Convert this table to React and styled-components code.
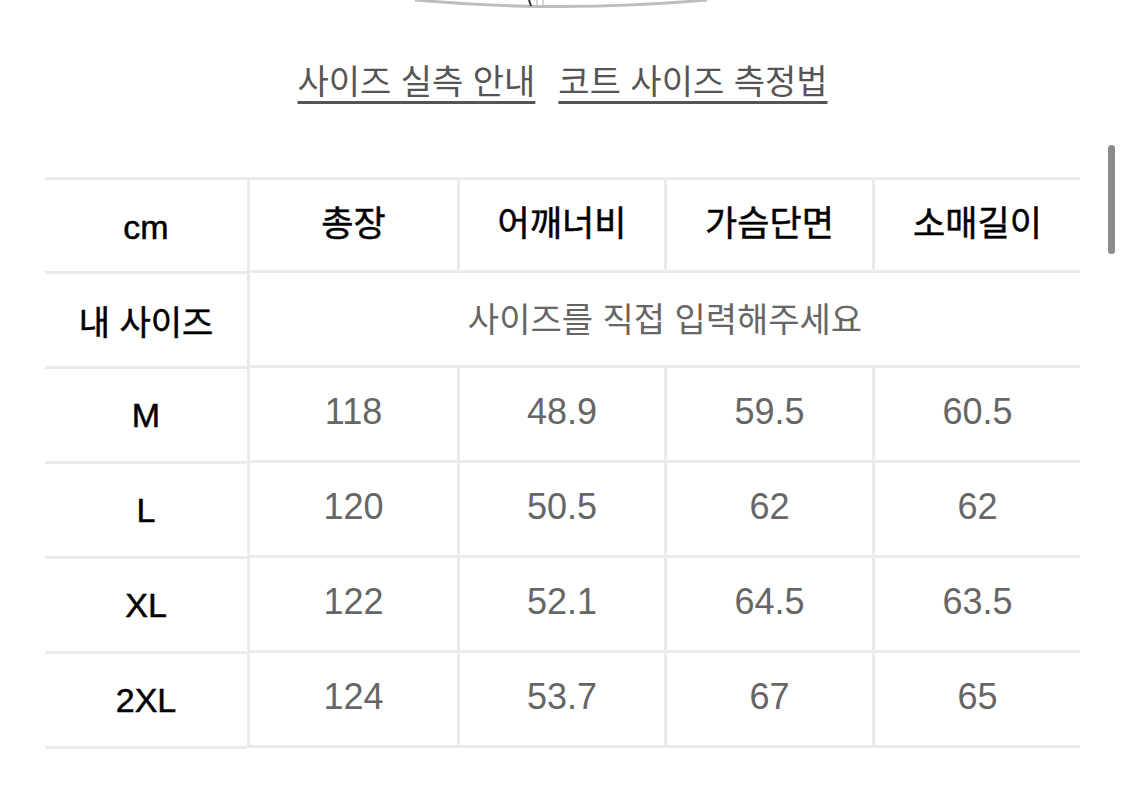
import React from 'react';
import styled, { createGlobalStyle } from 'styled-components';

const GlobalStyle = createGlobalStyle`
  html, body {
    margin: 0;
    padding: 0;
    background: #fff;
  }
  body {
    font-family: "Liberation Sans", "Noto Sans CJK KR", sans-serif;
    overflow: hidden;
  }
`;

const Page = styled.div`
  width: 1125px;
  height: 799px;
  position: relative;
  overflow: hidden;
`;

const Illustration = styled.div`
  height: 10px;
  display: flex;
  justify-content: center;
  padding-right: 4px;
  svg {
    display: block;
  }
`;

const GuideLinks = styled.div`
  display: flex;
  justify-content: center;
  gap: 23px;
  margin-top: 50px;
  height: 48px;
`;

const GuideLink = styled.a`
  font-size: 34px;
  line-height: 44px;
  color: #555;
  text-decoration: underline;
  text-decoration-thickness: 3px;
  text-underline-offset: 7px;
  cursor: pointer;
`;

const TableWrap = styled.div`
  margin: 69px 45px 0;
  display: flex;
  align-items: flex-start;
`;

const LabelColumn = styled.div`
  width: 202px;
  display: flex;
  flex-direction: column;
  border-top: 3px solid #ebebeb;
`;

const DataGrid = styled.div`
  flex: 1;
  display: grid;
  grid-template-columns: 210px 207px 208px 208px;
  border-top: 3px solid #ebebeb;
`;

const Cell = styled.div`
  height: ${(p) => (p.$head ? '80px' : '88px')};
  padding-bottom: ${(p) => (p.$head ? '10px' : '4px')};
  display: flex;
  align-items: center;
  justify-content: center;
  border-bottom: 3px solid #ebebeb;
  border-left: 3px solid #ebebeb;
  color: ${(p) => (p.$head ? '#000' : '#666')};
  font-size: ${(p) => (p.$head ? '35px' : p.$note ? '34px' : '36px')};
  -webkit-text-stroke: ${(p) => (p.$head ? '0.5px #000' : '0')};
  white-space: nowrap;
  grid-column: ${(p) => (p.$note ? '1 / -1' : 'auto')};
`;

const LabelCell = styled.div`
  height: ${(p) => (p.$head ? '88px' : '92px')};
  padding-top: ${(p) => (p.$head ? '3px' : '0')};
  display: flex;
  align-items: center;
  justify-content: center;
  border-bottom: 3px solid #ebebeb;
  color: #000;
  font-size: 34px;
  -webkit-text-stroke: 0.5px #000;
  white-space: nowrap;
`;

const Scrollbar = styled.div`
  position: absolute;
  right: 10px;
  top: 145px;
  width: 7px;
  height: 109px;
  border-radius: 4px;
  background: #8a8a8a;
`;

const headers = ['총장', '어깨너비', '가슴단면', '소매길이'];
const rows = [
  { size: 'M', values: ['118', '48.9', '59.5', '60.5'] },
  { size: 'L', values: ['120', '50.5', '62', '62'] },
  { size: 'XL', values: ['122', '52.1', '64.5', '63.5'] },
  { size: '2XL', values: ['124', '53.7', '67', '65'] },
];

export default function App() {
  return (
    <Page>
      <GlobalStyle />
      <Illustration>
        <svg width="296" height="10" viewBox="0 0 296 10">
          <path d="M2 0 Q148 13 294 0" fill="none" stroke="#bdbdbd" strokeWidth="3" />
          <path d="M116 0 L118 6" stroke="#333" strokeWidth="2" />
          <path d="M124 0 L124 5 M130 0 L130 5" stroke="#aaa" strokeWidth="1" />
        </svg>
      </Illustration>
      <GuideLinks>
        <GuideLink>사이즈 실측 안내</GuideLink>
        <GuideLink>코트 사이즈 측정법</GuideLink>
      </GuideLinks>
      <TableWrap>
        <LabelColumn>
          <LabelCell $head>cm</LabelCell>
          <LabelCell>내 사이즈</LabelCell>
          {rows.map((r) => (
            <LabelCell key={r.size}>{r.size}</LabelCell>
          ))}
        </LabelColumn>
        <DataGrid>
          {headers.map((h) => (
            <Cell key={h} $head>
              {h}
            </Cell>
          ))}
          <Cell $note>사이즈를 직접 입력해주세요</Cell>
          {rows.map((r) =>
            r.values.map((v, i) => <Cell key={r.size + i}>{v}</Cell>)
          )}
        </DataGrid>
      </TableWrap>
      <Scrollbar />
    </Page>
  );
}
